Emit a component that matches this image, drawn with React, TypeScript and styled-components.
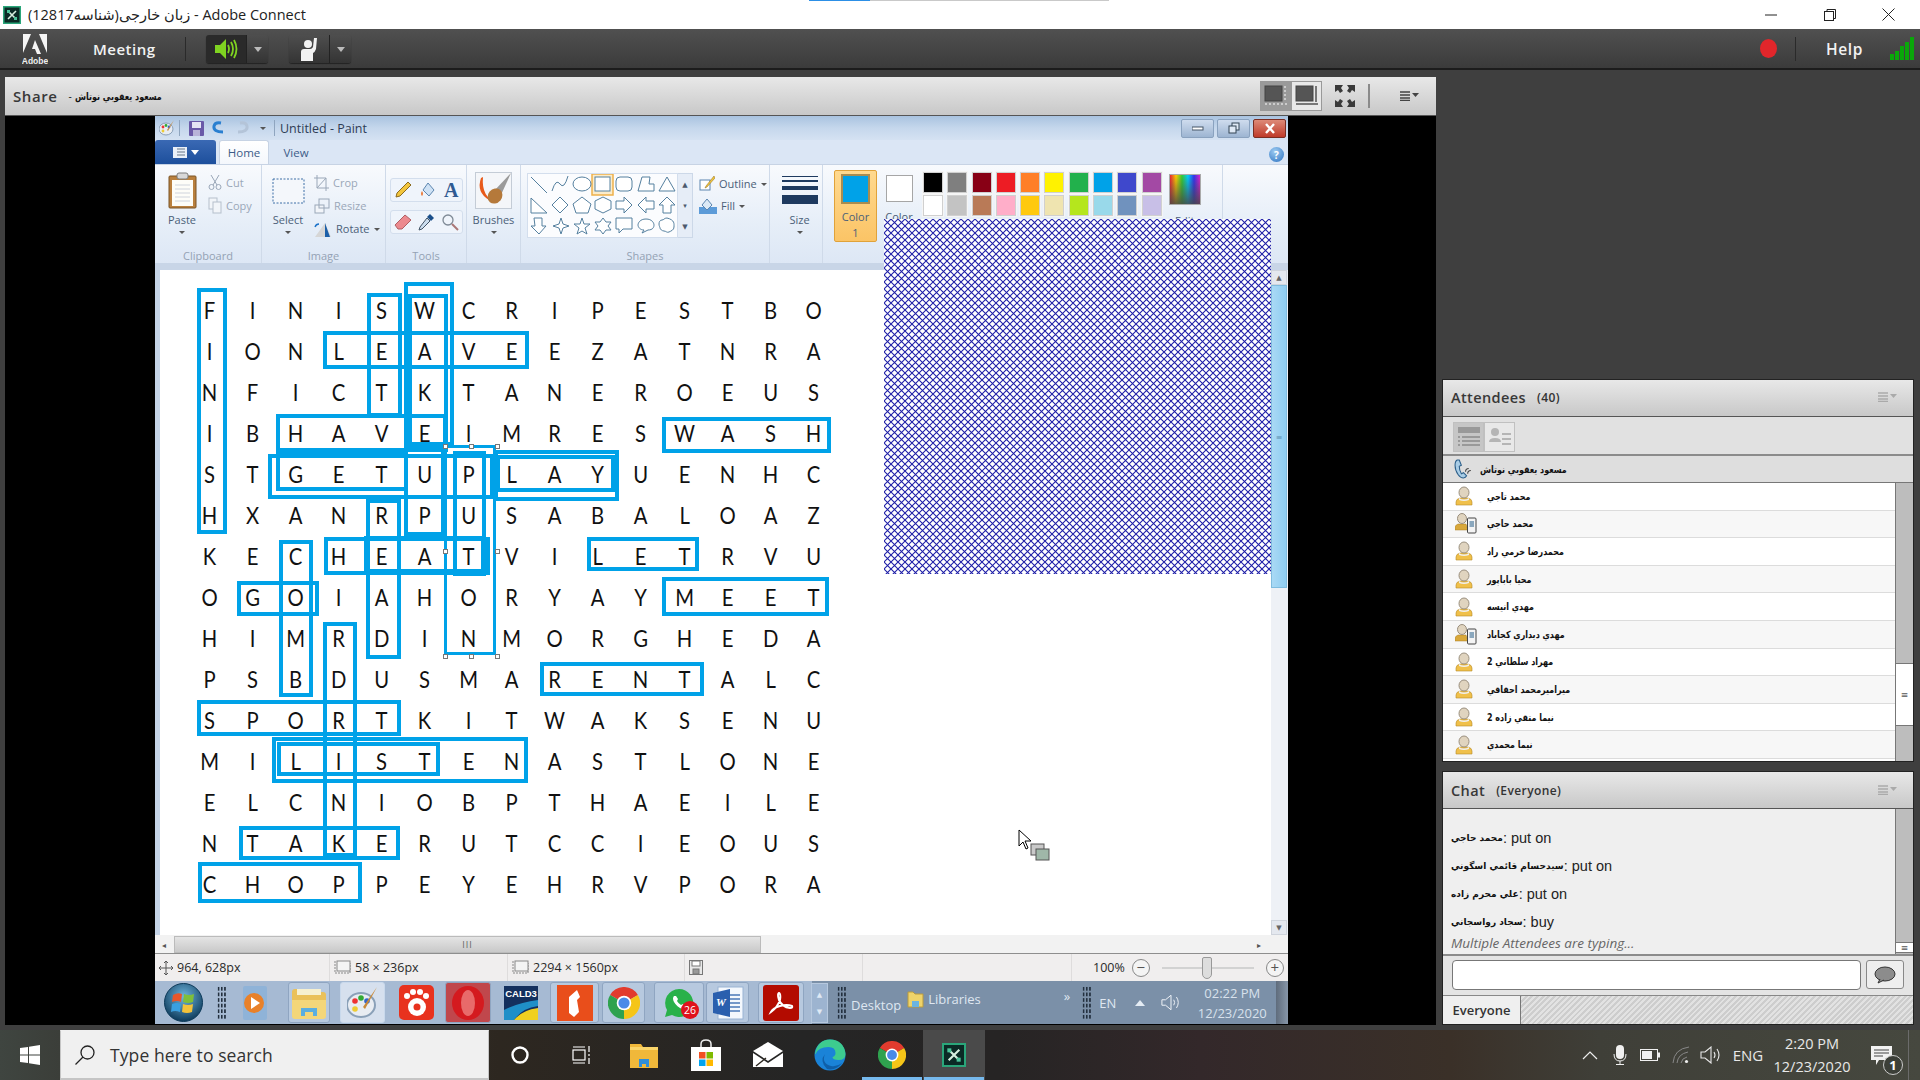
import React from "react";
import styled, { createGlobalStyle } from "styled-components";

const Global = createGlobalStyle`
  html, body { margin: 0; padding: 0; background: #3f3f3f; overflow: hidden; }
  * { box-sizing: border-box; }
`;
const UI = `"Open Sans", "DejaVu Sans", sans-serif`;
const AR = `"DejaVu Sans", sans-serif`;

const Page = styled.div`
  width: 1920px; height: 1080px; display: flex; flex-direction: column; position: relative; overflow: hidden;
  font-family: ${UI};
`;
/* ---------- window chrome ---------- */
const TitleBar = styled.div`
  height: 29px; background: #fff; display: flex; align-items: center; padding-left: 3px; gap: 7px; flex: none; color: #222;
  font-size: 14.5px;
`;
const LoadLine = styled.div`
  position: absolute; top: 0; left: 809px; width: 300px; height: 1px; background: linear-gradient(90deg, #2c8fe6 0 61px, #c9c9c9 61px);
`;
const WinCtl = styled.div`margin-left: auto; display: flex; padding-right: 2px;`;
const WinCtlBtn = styled.div`width: 59px; height: 29px; display: flex; align-items: center; justify-content: center;`;
const TopBar = styled.div`
  height: 41px; flex: none; display: flex; align-items: center; padding-left: 22px;
  background: linear-gradient(#505050, #3b3b3b); border-bottom: 2px solid #1c1c1c; color: #f2f2f2;
`;
const Meeting = styled.span`font-size: 15px; font-weight: 600; letter-spacing: .5px; margin-left: 45px; width: 92px;`;
const TopSep = styled.div<{ $mr?: number; $ml?: number }>`width: 1px; height: 24px; background: #2a2a2a; margin-right: ${p => p.$mr ?? 20}px; margin-left: ${p => p.$ml ?? 0}px;`;
const SplitBtn = styled.div`display: flex; height: 28px; margin-right: 21px; border-radius: 3px; overflow: hidden; box-shadow: 0 1px 1px #222;`;
const SplitMain = styled.div<{ $dark?: boolean }>`
  width: 41px; display: flex; align-items: center; justify-content: center;
  background: ${p => (p.$dark ? "#2a2a2a" : "linear-gradient(#4e4e4e, #343434)")}; border-right: 1px solid #222;
`;
const SplitArrow = styled.div`
  width: 21px; display: flex; align-items: center; justify-content: center; background: linear-gradient(#4e4e4e, #343434);
  &::after { content: ""; border: 4px solid transparent; border-top: 5px solid #bbb; margin-top: 5px; }
`;
const RecDot = styled.div`width: 17px; height: 19px; border-radius: 50%; background: #e2262b; margin-left: auto;`;
const Help = styled.span`font-size: 15.5px; font-weight: 600; letter-spacing: .6px; margin-left: 30px; width: 64px;`;
const Signal = styled.div`display: flex; align-items: flex-end; gap: 1px; height: 23px; margin-right: 6px;`;
const SignalBar = styled.div<{ $h: number }>`width: 4px; height: ${p => p.$h}px; background: #0aa70a;`;
/* ---------- main ---------- */
const Main = styled.div`flex: 1; min-height: 0; display: flex; background: #3f3f3f; padding: 7px 6px 5px 5px; gap: 6px;`;
const SharePod = styled.div`width: 1432px; display: flex; flex-direction: column; background: #000;`;
const PodHeader = styled.div<{ $h: number; $pb?: number }>`
  height: ${p => p.$h}px; flex: none; display: flex; align-items: center; padding: 0 8px ${p => p.$pb || 0}px 8px;
  background: linear-gradient(#e8e8e8, #c8c8c8); border-bottom: 1px solid #555; color: #333;
`;
const PodTitle = styled.span`font-size: 14.5px; font-weight: 600; letter-spacing: .4px; color: #383838;`;
const ShareTitle = styled(PodTitle)`font-size: 15px; letter-spacing: .6px;`;
const PodSub = styled.span`font-size: 12px; margin-left: 11px; color: #333; font-weight: 600; letter-spacing: .4px;`;
const ArabicName = styled.span<{ $s?: number }>`font-family: ${AR}; font-weight: 700; font-size: ${p => p.$s || 10}px; color: #111; unicode-bidi: isolate; direction: rtl;`;
const SqueezedName = styled(ArabicName)`display: inline-block; transform: scaleX(.8); transform-origin: left center; white-space: nowrap;`;
const ShareDash = styled.span`font-size: 10px; margin: 0 3px 0 11px; color: #111;`;
const ShareTools = styled.div`margin-left: auto; display: flex; align-items: center; padding-right: 9px;`;
const LayoutBtn = styled.div<{ $on?: boolean }>`
  width: 31px; height: 30px; display: flex; align-items: center; justify-content: center; border: 1px solid #999;
  background: ${p => (p.$on ? "#e8e8e8" : "#9a9a9a")};
`;
const VLine = styled.div`width: 2px; height: 24px; background: #8a8a8a; margin: 0 30px 0 13px;`;
const ShareBody = styled.div`flex: 1; min-height: 0; padding-left: 150px; padding-right: 148px;`;
/* ---------- paint ---------- */
const Paint = styled.div`height: 100%; display: flex; flex-direction: column; position: relative; font-family: ${UI}; overflow: hidden;`;
const PTitle = styled.div`
  height: 24px; flex: none; display: flex; align-items: center; padding-left: 4px;
  background: linear-gradient(#a9c3e0, #c5d7ec 50%, #d5e2f2);
`;
const PTitleText = styled.span`font-size: 12.5px; color: #2e3c55; margin-left: 5px;`;
const QIcon = styled.span<{ $ml?: number; $mt?: number }>`display: inline-flex; margin-left: ${p => p.$ml || 0}px; margin-top: ${p => p.$mt || 0}px;`;
const QSep = styled.div<{ $ml?: number }>`width: 1px; height: 16px; background: #8fa5bf; margin-left: ${p => p.$ml || 0}px;`;
const CaptionBtns = styled.div`margin-left: auto; display: flex; gap: 3px; padding-right: 2px;`;
const Caption = styled.div<{ $close?: boolean }>`
  width: 33px; height: 19px; border-radius: 2px; border: 1px solid ${p => (p.$close ? "#7a2d22" : "#8aa2bf")};
  background: ${p => (p.$close ? "linear-gradient(#dd8a78, #bf3a2a)" : "linear-gradient(#cfdcee, #9db5d2)")};
  display: flex; align-items: center; justify-content: center;
`;
const PTabs = styled.div`height: 25px; flex: none; display: flex; align-items: flex-end; background: #dbe6f5; position: relative; border-bottom: 1px solid #c7d3e4;`;
const FileBtn = styled.div`width: 61px; height: 24px; background: linear-gradient(#3a69b4, #1d4f9c); border-radius: 3px 3px 0 0; display: flex; align-items: center; justify-content: center; gap: 4px;`;
const FileCaret = styled.span`border: 4px solid transparent; border-top: 5px solid #fff; margin-top: 5px;`;
const Tab = styled.div<{ $on?: boolean }>`
  height: 24px; width: ${p => (p.$on ? 50 : 46)}px; margin-left: ${p => (p.$on ? 3 : 4)}px; font-size: 11.5px; color: #3c5c88;
  display: flex; align-items: center; justify-content: center;
  background: ${p => (p.$on ? "linear-gradient(#fff, #f4f7fc)" : "transparent")};
  border: ${p => (p.$on ? "1px solid #c7d3e4" : "0")}; border-bottom: 0; border-radius: 3px 3px 0 0;
`;
const HelpBall = styled.div`
  position: absolute; right: 4px; top: 7px; width: 15px; height: 15px; border-radius: 50%;
  background: radial-gradient(circle at 40% 30%, #9dcbf2, #2c72c0); color: #fff; font-size: 10px; font-weight: 700;
  display: flex; align-items: center; justify-content: center;
`;
const Ribbon = styled.div`
  height: 105px; flex: none; display: flex; background: linear-gradient(#f8fafd, #e6eef8 60%, #dde7f5);
  border-bottom: 7px solid #c8d5e7; color: #4b5f78; font-size: 11px;
`;
const RGroup = styled.div<{ $w: number }>`
  width: ${p => p.$w}px; flex: none; display: flex; flex-direction: column; border-right: 1px solid #cfdae9; position: relative;
`;
const RBody = styled.div`flex: 1; min-height: 0; display: flex; padding-top: 7px;`;
const RLabel = styled.div`height: 14px; text-align: center; color: #94a2b4; font-size: 11px; line-height: 14px;`;
const BigBtn = styled.div<{ $w: number; $ml?: number }>`
  width: ${p => p.$w}px; margin-left: ${p => p.$ml || 0}px; display: flex; flex-direction: column; align-items: center; color: #4b5f78; font-size: 11px; line-height: 15px;
`;
const BigIcon = styled.div`height: 37px; display: flex; align-items: center; margin-bottom: 3px;`;
const Caret = styled.span`border: 3px solid transparent; border-top: 3px solid #555; margin-top: 4px; height: 0;`;
const SmallCol = styled.div<{ $ml?: number }>`margin-left: ${p => p.$ml || 0}px; padding-top: 1px; display: flex; flex-direction: column; gap: 4px;`;
const SmallBtn = styled.div<{ $off?: boolean }>`
  height: 19px; display: flex; align-items: center; gap: 4px; color: ${p => (p.$off ? "#9aa7b8" : "#4b5f78")}; font-size: 11px;
`;
const ToolPanel = styled.div`
  width: 73px; height: 24px; margin: 0 0 8px 4px; display: flex; align-items: center; justify-content: space-around;
  background: #eff4fb; border: 1px solid #d3deed; border-radius: 3px;
`;
const ToolCol = styled.div`padding-top: 6px; display: flex; flex-direction: column;`;
const ShapesPanel = styled.div`
  margin-left: 6px; margin-top: 1px; width: 151px; height: 65px; flex: none; background: #fbfcfe; border: 1px solid #d3deed;
`;
const ShapeScroll = styled.div`
  width: 15px; height: 65px; flex: none; margin-top: 1px; border: 1px solid #ccd8e8; border-left: 0; background: #e6edf7; display: flex; flex-direction: column; align-items: center; justify-content: space-around; font-size: 7px; color: #4c5a6d;
`;
const OutlineCol = styled.div`margin-left: 6px; padding-top: 2px; display: flex; flex-direction: column; gap: 3px;`;
const ColorOne = styled.div`
  width: 43px; height: 72px; flex: none; margin-left: 11px; margin-top: -2px; border: 1px solid #e0a23a; border-radius: 2px;
  background: linear-gradient(#ffd98f, #fbc466); display: flex; flex-direction: column; align-items: center; padding-top: 3px; color: #4b5f78; font-size: 11px; line-height: 16px; text-align: center;
`;
const ColorChip = styled.div<{ $c: string }>`width: 29px; height: 33px; background: ${p => p.$c}; border: 2px solid #a98c50; margin-bottom: 5px;`;
const ColorTwo = styled.div`
  width: 36px; flex: none; margin-left: 4px; display: flex; flex-direction: column; align-items: center; font-size: 11px; color: #4b5f78;
`;
const ColorTwoChip = styled.div`width: 27px; height: 27px; background: #fff; border: 1px solid #a6a6a6; margin: 3px 0 7px;`;
const Palette = styled.div`display: grid; flex: none; grid-template-columns: repeat(10, 20px); grid-auto-rows: 21px; column-gap: 4.3px; row-gap: 2px; margin-left: 6px; height: 44px;`;
const Swatch = styled.div<{ $c: string }>`background: ${p => p.$c}; border: 1px solid #d0d0d0; outline: 1px solid #f5f5f5;`;
const EditColors = styled.div`margin-left: 7px; flex: none; display: flex; flex-direction: column; align-items: center; font-size: 11px; color: #4b5f78;`;
const Spectrum = styled.div`
  width: 32px; height: 31px; margin: 2px 0 8px; border: 1px solid #aaa;
  background: linear-gradient(transparent, rgba(70,70,70,.85)), linear-gradient(90deg, #e23, #fc0, #3c3, #0cf, #33e, #d2c);
`;
const CanvasRow = styled.div`flex: 1; min-height: 0; display: flex;`;
const CanvasPane = styled.div`
  flex: 1; position: relative; background: #fff; border-left: 5px solid #c4d3e6; padding: 20.5px 0 0 27.5px;
`;
const WordGrid = styled.div`
  display: grid; grid-template-columns: repeat(15, 43.2px); grid-auto-rows: 40.95px; font-family: Lato, "Open Sans", sans-serif; font-size: 22.5px; color: #111;
`;
const Letter = styled.div`display: flex; align-items: center; justify-content: center; transform: scaleX(.9);`;
const WordBox = styled.div`position: absolute; border: 4px solid #00a2e8;`;
const Selection = styled.div`
  position: absolute; border: 2px dashed #fff; outline: 3px solid #00a2e8; outline-offset: -3px;
`;
const Handle = styled.div`position: absolute; width: 5px; height: 5px; background: #fff; border: 1px solid #777;`;
const CursorWrap = styled.div`position: absolute; left: 858px; top: 559px; display: flex;`;
const Lattice = styled.div`position: absolute; left: 729px; top: 103px; width: 387px; height: 355px; display: flex;`;
const VScroll = styled.div`width: 17px; flex: none; background: #eef1f6; display: flex; flex-direction: column; padding-right:1px;`;
const ScrollCap = styled.div`height: 15px; flex: none; background: #e4e8ef; border: 1px solid #cfd4dc; display: flex; align-items: center; justify-content: center; color: #666; font-size: 7px;`;
const ScrollFill = styled.div`flex: 1;`;
const VThumb = styled.div`
  height: 303px; flex: none; background: linear-gradient(90deg, #a9d9f5, #8fcdf1); border: 1px solid #7fbcdf; display: flex; align-items: center; justify-content: center; color: #5b8fb0; font-size: 8px;
`;
const HScroll = styled.div`height: 18px; flex: none; display: flex; align-items: center; background: #f2f2f2; color: #555; font-size: 8px; padding-left: 7px;`;
const HThumb = styled.div`
  width: 587px; height: 17px; margin-left: 8px; background: linear-gradient(#e4e4e4, #c9c9c9); border: 1px solid #bbb; display: flex; align-items: center; justify-content: center; color: #666; font-size: 9px; letter-spacing: 1px;
`;
const HEnd = styled.span`margin-left: 496px;`;
const Status = styled.div`
  height: 28px; flex: none; background: #f0eeee; border-top: 1px solid #8e8e8e; display: flex; align-items: center; color: #2a2a2a; font-size: 12.5px;
`;
const StatusCell = styled.div<{ $w: number }>`
  width: ${p => p.$w}px; height: 100%; flex: none; display: flex; align-items: center; gap: 4px; padding-left: 4px; border-right: 1px solid #dedcdc;
`;
const ZoomPct = styled.span`margin: 0 7px 0 21px;`;
const ZoomSlider = styled.div`width: 92px; height: 2px; background: #d2d2d2; margin: 0 12px; position: relative;`;
const ZoomThumb = styled.div`position: absolute; left: 40px; top: -10px; width: 10px; height: 22px; background: #ddd; border: 1px solid #999; border-radius: 2px 2px 5px 5px;`;
const RoundBtn = styled.div`width: 18px; height: 18px; border: 1px solid #888; border-radius: 50%; display: flex; align-items: center; justify-content: center; font-size: 15px; line-height: 1; color: #555; background: #f4f4f4;`;
/* ---------- Win7 taskbar ---------- */
const Win7Bar = styled.div`
  height: 44px; flex: none; display: flex; align-items: center; color: #dfe7f1; font-size: 14px;
  background: linear-gradient(90deg, #a6bad3 0 657px, #7b90a8 657px); padding-left: 9px; border-bottom: 1px solid #000;
`;
const Tile = styled.div<{ $w: number; $ml: number; $on?: boolean; $bare?: boolean; $red?: boolean }>`
  width: ${p => p.$w}px; margin-left: ${p => p.$ml}px; height: 41px; flex: none; display: flex; align-items: center; justify-content: center; position: relative;
  ${p => !p.$bare && `border: 1px solid ${p.$on ? "#c9d9ec" : "#8fa5c1"}; border-radius: 3px; background: ${p.$red ? "#c0474c" : p.$on ? "rgba(240,245,252,.65)" : "rgba(205,220,238,.45)"};`}
`;
const Grip = styled.div<{ $ml: number }>`
  margin-left: ${p => p.$ml}px; width: 9px; height: 34px; flex: none;
  background-image: radial-gradient(#23303f 1px, transparent 1.2px); background-size: 3.2px 5.6px;
`;
const Spinner = styled.div`margin-left: 7px; width: 17px; height: 40px; flex: none; background: #9db4d0; border: 1px solid #b6c8de; display: flex; flex-direction: column; align-items: center; justify-content: space-between; padding: 6px 0; font-size: 7px; color: #dfe9f5;`;
const DeskText = styled.span<{ $ml: number; $mt?: number }>`margin-left: ${p => p.$ml}px; margin-top: ${p => p.$mt || 0}px; font-size: 13px; flex: none;`;
const Win7Clock = styled.div`margin-left: 14px; width: 74px; text-align: center; line-height: 20px; font-size: 13px; color: #d8e1ec;`;
const ShowDesk = styled.div`margin-left: auto; width: 12px; height: 100%; background: linear-gradient(90deg, #5f6c7c, #8796a8);`;
/* ---------- right column ---------- */
const RightCol = styled.div`flex: 1; display: flex; flex-direction: column; justify-content: flex-end; gap: 9px;`;
const AttPod = styled.div`height: 383px; display: flex; flex-direction: column; background: #e0e0e0; border: 1px solid #222; border-left-color: #222;`;
const MenuGlyph = styled.span`margin-left: auto; display: inline-flex; margin-right: 8px;`;
const ViewBar = styled.div`height: 39px; flex: none; background: #e1e1e1; border-bottom: 2px solid #8b8b8b; padding: 5px 0 0 10px; display: flex;`;
const ViewBtn = styled.div<{ $on?: boolean }>`
  width: 31px; height: 30px; border: 1px solid #c0c0c0; background: ${p => (p.$on ? "#c6c6c6" : "#e8e8e8")}; display: flex; align-items: center; justify-content: center;
`;
const PresenterRow = styled.div`height: 27px; flex: none; background: #dedede; border-bottom: 1px solid #777; display: flex; align-items: center; padding-left: 11px; gap: 6px;`;
const ListWrap = styled.div`flex: 1; min-height: 0; display: flex;`;
const AttList = styled.div`flex: 1; display: flex; flex-direction: column; padding-bottom: 2px; background: #fff;`;
const AttRow = styled.div<{ $alt: boolean }>`
  flex: 1; display: flex; align-items: center; padding-left: 12px; gap: 14px; background: ${p => (p.$alt ? "#f7f7f7" : "#fff")}; border-bottom: 1px solid #dcdcdc;
`;
const AttRowMobile = styled(AttRow)`gap: 10px;`;
const SideScroll = styled.div`width: 18px; flex: none; background: #bdbdbd; border-left: 1px solid #777; display: flex; flex-direction: column;`;
const SideThumb = styled.div<{ $h: number; $mt: number }>`
  height: ${p => p.$h}px; margin-top: ${p => p.$mt}px; flex: none; background: #fff; border-top: 1px solid #777; border-bottom: 1px solid #777; display: flex; align-items: center; justify-content: center; font-size: 9px; color: #555; line-height: 1;
`;
const ChatPod = styled.div`height: 254px; display: flex; flex-direction: column; background: #efefef; border: 1px solid #222;`;
const ChatBody = styled.div`height: 147px; flex: none; display: flex; border-bottom: 2px solid #8b8b8b;`;
const Msgs = styled.div`flex: 1; padding: 15px 0 0 8px; position: relative; font-family: "Liberation Sans", sans-serif; font-size: 14.5px; color: #222;`;
const Msg = styled.div`height: 28px; display: flex; align-items: center; gap: 0; white-space: pre;`;
const Typing = styled.div`font-family: ${UI}; font-style: italic; font-size: 13.5px; color: #666; margin-top: -2px;`;
const InputRow = styled.div`height: 40px; flex: none; background: #e4e4e4; padding: 4px 9px 0 9px; display: flex; gap: 5px; border-bottom: 1px solid #888;`;
const ChatInput = styled.div`width: 409px; height: 30px; background: #fff; border: 1px solid #777; border-radius: 4px;`;
const SendBtn = styled.div`width: 38px; height: 29px; background: #eee; border: 1px solid #888; border-radius: 3px; display: flex; align-items: center; justify-content: center;`;
const ChatFoot = styled.div`flex: 1; display: flex; background: repeating-linear-gradient(-45deg, #cdcdcd 0 2px, #e2e2e2 2px 4px);`;
const ChatTab = styled.div`width: 78px; background: #efefef; border-right: 1px solid #777; display: flex; align-items: center; justify-content: center; font-size: 13px; font-weight: 600; color: #333;`;
/* ---------- Win10 taskbar ---------- */
const Taskbar = styled.div`
  height: 50px; flex: none; display: flex; align-items: center; color: #eee;
  background: linear-gradient(90deg, #3f4540 0, #3b3e39 60px, #2d2720 500px, #252525 800px, #262424 1000px, #33282a 1200px, #3a3028 1450px, #3f3f38 1600px, #46483f 1920px);
`;
const StartBtn = styled.div`width: 60px; height: 50px; display: flex; align-items: center; justify-content: center;`;
const SearchBox = styled.div`
  width: 429px; height: 50px; background: #f0f0f0; border: 1px solid #c5c5c5; border-bottom: 2px solid #c5c5c5; border-top-color: #f0f0f0; display: flex; align-items: center; padding-left: 14px; gap: 15px; color: #333; font-size: 17.5px; letter-spacing: .1px;
`;
const TaskItem = styled.div<{ $on?: boolean; $open?: boolean }>`
  width: 62px; height: 50px; display: flex; align-items: center; justify-content: center; position: relative; flex: none;
  background: ${p => (p.$on ? "#4a4a4a" : "transparent")};
  ${p => (p.$open ? `&::after { content: ""; position: absolute; left: 0; right: 0; bottom: 0; height: 3px; margin: 0 1px; background: #76b9ed; }` : "")}
`;
const Tray = styled.div`margin-left: auto; display: flex; align-items: center; height: 50px;`;
const TrayItem = styled.div<{ $w: number }>`width: ${p => p.$w}px; height: 50px; display: flex; align-items: center; justify-content: center; flex: none; position: relative; font-size: 15px; color: #e8e8e8;`;
const Clock = styled.div`text-align: center; line-height: 23px; font-size: 14.5px; color: #e8e8e8;`;
const NotifBadge = styled.span`position: absolute; left: 29px; top: 25px; width: 20px; height: 20px; border-radius: 50%; border: 1px solid #ccc; background: #3c3f38; font-size: 13px; font-weight: 700; display: flex; align-items: center; justify-content: center; color: #fff;`;
const DeskStrip = styled.div`width: 12px; height: 50px; border-left: 1px solid #6b6b6b; flex: none;`;

/* ---------- drawings ---------- */
const ACIcon = ({ s = 18 }: { s?: number }) => (
  <svg width={s} height={s} viewBox="0 0 18 18">
    <rect x=".75" y=".75" width="16.5" height="16.5" fill="#0b2a25" stroke="#2aa67a" strokeWidth="1.5" />
    <path d="M5 5 L13 13 M13 5 L5 13" stroke="#d8f0e0" strokeWidth="1.6" />
    <rect x="4" y="4" width="3" height="3" fill="#4cc49a" /><rect x="11" y="11" width="3" height="3" fill="#4cc49a" />
  </svg>
);
const AdobeLogo = () => (
  <svg width="26" height="32" viewBox="0 0 26 32">
    <path d="M1 1h8L1 20z M25 1h-8l8 19z M13 7l6 14h-4l-2-5h-3z" fill="#f5f5f5" />
    <text x="13" y="31" fontSize="8.5" fontFamily="Liberation Sans" fontWeight="700" fill="#eee" textAnchor="middle">Adobe</text>
  </svg>
);
const Speaker = () => (
  <svg width="24" height="22" viewBox="0 0 24 22">
    <path d="M1 7h5l6-6v20l-6-6H1z" fill="#7fd321" />
    <path d="M14 7q2 4 0 8M17 4q4 7 0 14M20 2q5 9 0 18" stroke="#7fd321" strokeWidth="1.8" fill="none" />
  </svg>
);
const HandRaise = () => (
  <svg width="20" height="24" viewBox="0 0 20 24" fill="#f2f2f2">
    <circle cx="9" cy="7" r="4" /><path d="M2 24v-9q0-3 3-3h6q2 0 3-2l1-9h3l-1 11q-1 3-3 4v8z" />
  </svg>
);
const LayoutIcon = ({ dark }: { dark?: boolean }) => (
  <svg width="24" height="22" viewBox="0 0 24 22">
    <rect x="1" y="1" width="17" height="15" fill="#555" stroke="#444" />
    <path d="M1 19h22M21 1v16" stroke={dark ? "#ccc" : "#777"} strokeWidth="2" strokeDasharray={dark ? "2 2" : "none"} />
  </svg>
);
const FullIcon = () => (
  <svg width="20" height="22" viewBox="0 0 20 22" fill="#3a3a3a">
    <path d="M0 0h8L6 3l2 3-3 2-2-3-3 2z M20 0h-8l2 3-2 3 3 2 2-3 3 2z M0 22h8l-2-3 2-3-3-2-2 3-3-2z M20 22h-8l2-3-2-3 3-2 2 3 3-2z" />
  </svg>
);
const MenuIcon = ({ c = "#444" }: { c?: string }) => (
  <svg width="19" height="10" viewBox="0 0 19 10">
    <path d="M0 1h10M0 4h10M0 7h10M0 9.5h10" stroke={c} strokeWidth="1.3" /><path d="M12 2h7l-3.5 4z" fill={c} />
  </svg>
);
const UserIcon = () => (
  <svg width="18" height="20" viewBox="0 0 18 20">
    <path d="M1 19v-3q0-3 4-4h8q4 1 4 4v3z" fill="#f0c04a" stroke="#b58a2a" strokeWidth=".6" />
    <ellipse cx="9" cy="6.5" rx="5" ry="5.5" fill="#e0d4bf" stroke="#9a8f7e" /><path d="M4 12q5 3 10 0v2q-5 2-10 0z" fill="#efefef" />
  </svg>
);
const UserMobile = () => (
  <svg width="22" height="21" viewBox="0 0 22 21">
    <path d="M0 17v-2q0-3 3-4h8l2 6z" fill="#d9a83a" stroke="#a97f25" strokeWidth=".5" />
    <ellipse cx="7" cy="5.5" rx="4.5" ry="5" fill="#e0d4bf" stroke="#9a8f7e" />
    <rect x="12.5" y="5" width="8.5" height="15" rx="1" fill="#f4f4f4" stroke="#444" />
    <rect x="14.5" y="8" width="4.5" height="6" fill="#8aa7bd" />
  </svg>
);
const PhoneIcon = () => (
  <svg width="20" height="20" viewBox="0 0 19 19">
    <path d="M3 1q-2 1-2 5 0 5 3 9 2 3 5 3 2 0 3-2l-3-3-2 1Q5 11 5 7l2-1-2-5z" fill="#a9cde6" stroke="#2c5f8a" />
    <path d="M11 12q0-3 3-3M13 14q0-3 3-3" stroke="#444" fill="none" />
  </svg>
);
const Clipboard = () => (
  <svg width="29" height="37" viewBox="0 0 29 37">
    <rect x="1" y="4" width="27" height="32" rx="1" fill="#b9803e" stroke="#7b5526" />
    <rect x="4" y="8" width="21" height="26" fill="#fdfdf8" />
    <path d="M7 13h15M7 17h15M7 21h15M7 25h15M7 29h15" stroke="#cfd4dc" />
    <rect x="9" y="1" width="11" height="6" rx="2" fill="#d8d8d8" stroke="#7c7c7c" />
  </svg>
);
const Scissors = () => (
  <svg width="14" height="17" viewBox="0 0 14 17" stroke="#9aa7b8" fill="none">
    <path d="M3 1l6 10M11 1L5 11" /><circle cx="3.5" cy="13" r="2.5" /><circle cx="10.5" cy="13" r="2.5" />
  </svg>
);
const CopyIcon = () => (
  <svg width="14" height="17" viewBox="0 0 14 17" stroke="#b5bfcc" fill="#f2f5f9">
    <rect x="1" y="1" width="8" height="11" /><rect x="5" y="5" width="8" height="11" />
  </svg>
);
const SelectIcon = () => <svg width="33" height="26" viewBox="0 0 33 26"><rect x="1" y="1" width="31" height="24" fill="#f4f7fb" stroke="#3c6ea6" strokeDasharray="2 1.5" /></svg>;
const CropIcon = () => <svg width="15" height="16" viewBox="0 0 15 16" fill="none" stroke="#9aa7b8"><path d="M3 0v13h12M0 3h12v13M3 13L12 3" /></svg>;
const ResizeIcon = () => <svg width="16" height="16" viewBox="0 0 16 16" fill="#f2f5f9" stroke="#9aa7b8"><rect x="1" y="7" width="9" height="8" /><rect x="5" y="1" width="10" height="9" fill="none" /></svg>;
const RotateIcon = () => <svg width="18" height="18" viewBox="0 0 18 18"><path d="M1 17h16L11 3z" fill="#d6d6d6" /><path d="M11 3l5 14h-5z" fill="#1c5fa8" /><path d="M1 7q1-3 4-3" stroke="#1d73c9" fill="none" strokeWidth="1.4" /></svg>;
const Pencil = () => <svg width="18" height="18" viewBox="0 0 18 18"><path d="M14 1l3 3L6 15l-4 1 1-4z" fill="#f2c53d" stroke="#8a6a1e" /></svg>;
const Bucket = () => <svg width="18" height="18" viewBox="0 0 18 18"><path d="M9 2l6 7-5 6-6-6z" fill="#cfe2f5" stroke="#5c86b0" /><path d="M3 10q-2 3 0 5 2-2 0-5z" fill="#ea7a3a" /></svg>;
const BigA = styled.span`font-family: "Liberation Serif", serif; font-weight: 700; font-size: 20px; color: #2f5a92; line-height: 1;`;
const Eraser = () => <svg width="18" height="18" viewBox="0 0 18 18"><path d="M11 2l6 5-9 9H4l-3-4z" fill="#ec8a8f" stroke="#b05e62" /></svg>;
const Dropper = () => <svg width="18" height="18" viewBox="0 0 18 18"><path d="M13 1l4 4-3 3-4-4z" fill="#1b4f8a" /><path d="M10 5l3 3-8 8-3 1 1-3z" fill="#cde" stroke="#456" /></svg>;
const Magnifier = () => <svg width="18" height="18" viewBox="0 0 18 18" fill="none" stroke="#7f8a96" strokeWidth="1.3"><circle cx="7" cy="7" r="5" /><path d="M11 11l6 6" stroke="#a77" strokeWidth="2" /></svg>;
const BrushIcon = () => (
  <svg width="37" height="37" viewBox="0 0 37 37">
    <rect x=".5" y=".5" width="36" height="36" fill="#f4f6f9" stroke="#c4ccd6" />
    <path d="M6 6q-5 14 8 22 6 3 8 3-16-6-14-26z" fill="#e85a1a" /><path d="M36 1L19 19l6 6z" fill="#9a9a9a" />
    <ellipse cx="20" cy="24" rx="7" ry="8" fill="#b5793a" transform="rotate(40 20 24)" />
  </svg>
);
const shapeStroke = { stroke: "#55809f", fill: "#fff", strokeWidth: 1 };
const Shapes = () => (
  <svg width="149" height="63" viewBox="0 0 149 63">
    <rect x="64" y="0" width="21" height="21" fill="#fbeccb" stroke="#eeb04a" strokeWidth="1.5" />
    <g {...shapeStroke}>
      <path d="M3 3l16 16" /><path d="M24 17q4-13 8-7t8-8" fill="none" /><ellipse cx="54" cy="10" rx="9" ry="7" />
      <rect x="67" y="3" width="15" height="14" /><rect x="88" y="3" width="16" height="14" rx="4" />
      <path d="M110 17l4-14h8l-1 7h5v7z" /><path d="M131 17l8-14 8 14z" />
      <path d="M3 39V24l16 15z" /><path d="M32 23l8 8-8 8-8-8z" /><path d="M54 23l9 7-3 9H48l-3-9z" />
      <path d="M75 23l8 4v8l-8 4-8-4v-8z" /><path d="M88 27h8v-4l8 8-8 8v-4h-8z" /><path d="M126 27h-8v-4l-8 8 8 8v-4h8z" />
      <path d="M139 23l8 8h-4v8h-8v-8h-4z" />
      <path d="M6 44h8v8h4l-7 8-8-8h4z" /><path d="M33 44l2 6 6 2-6 2-2 6-2-6-6-2 6-2z" /><path d="M54 44l2 6h6l-5 4 2 6-5-3-5 3 2-6-5-4h6z" />
      <path d="M75 44l3 4h5l-3 4 3 4h-5l-3 4-3-4h-5l3-4-3-4h5z" /><path d="M88 44h16v11h-9l-4 4v-4h-3z" />
      <path d="M118 45c-6 0-8 4-8 6s2 5 6 5l-2 3 6-3c5 0 6-3 6-5s-2-6-8-6z" /><path d="M139 44c-3 0-3 2-5 2s-3 2-3 4 1 3 1 4 2 3 4 3 3 2 5 1 5-2 5-5 1-7-7-9z" />
    </g>
  </svg>
);
const OutlineIcon = () => <svg width="16" height="15" viewBox="0 0 16 15"><rect x="1" y="4" width="10" height="10" fill="#fff" stroke="#5c86b0" /><path d="M15 0l1 2-8 9-2 1 1-2z" fill="#f2c53d" stroke="#8a6a1e" strokeWidth=".5" /></svg>;
const FillIcon = () => <svg width="18" height="16" viewBox="0 0 18 16"><rect x="0" y="9" width="18" height="7" fill="#5c9bd8" /><path d="M8 1l5 6-5 5-5-5z" fill="#dce9f5" stroke="#5c86b0" /></svg>;
const SizeLines = () => (
  <svg width="36" height="29" viewBox="0 0 36 29" fill="#1e3a5f">
    <rect y="0" width="36" height="1" /><rect y="4" width="36" height="2" /><rect y="10" width="36" height="4" /><rect y="19" width="36" height="9" />
  </svg>
);
const LatticeArt = () => (
  <svg width="387" height="355">
    <defs>
      <pattern id="lat" width="7" height="7" patternUnits="userSpaceOnUse">
        <rect width="7" height="7" fill="#fff" />
        <path d="M0 0L7 7M7 0L0 7" stroke="#1f1fa8" strokeWidth="1.1" />
      </pattern>
    </defs>
    <rect width="387" height="355" fill="url(#lat)" />
  </svg>
);
const MoveIcon = () => <svg width="14" height="14" viewBox="0 0 14 14" stroke="#555" fill="none"><path d="M7 0v14M0 7h14M5 2l2-2 2 2M5 12l2 2 2-2M2 5L0 7l2 2M12 5l2 2-2 2" /></svg>;
const DimIcon = ({ w = 17 }: { w?: number }) => <svg width={w} height="15" viewBox="0 0 17 15" fill="#f4f4f4" stroke="#888"><path d="M1 1v12h15V3" fill="none" strokeDasharray="2 1" /><rect x="3" y="1" width="13" height="10" /></svg>;
const SaveSmall = () => <svg width="14" height="15" viewBox="0 0 14 15" fill="#e8e8e8" stroke="#777"><rect x=".5" y=".5" width="13" height="14" /><rect x="3" y="1" width="8" height="5" fill="#fff" /><rect x="4" y="9" width="6" height="5" fill="#999" /></svg>;
const PaletteIcon = ({ s = 16 }: { s?: number }) => (
  <svg width={s} height={s} viewBox="0 0 16 16">
    <ellipse cx="7" cy="9" rx="7" ry="6" fill="#e8ecf2" stroke="#8aa0b8" /><circle cx="4" cy="7" r="1.4" fill="#e33" /><circle cx="7" cy="5.5" r="1.4" fill="#3a3" /><circle cx="10" cy="7" r="1.4" fill="#36c" /><circle cx="4" cy="11" r="1.4" fill="#ec3" />
    <path d="M15 0L8 10l1 1z" fill="#c98a3a" />
  </svg>
);
const Floppy = () => <svg width="15" height="15" viewBox="0 0 15 15"><rect width="15" height="15" rx="1" fill="#6a5aa8" /><rect x="3" y="1" width="9" height="6" fill="#e6e6f4" /><rect x="4" y="9" width="7" height="6" fill="#b8b4d8" /></svg>;
const Undo = ({ off }: { off?: boolean }) => <svg width="15" height="16" viewBox="0 0 15 16" fill="none" stroke={off ? "#b4c4d8" : "#2a7fd0"} strokeWidth="3"><path d={off ? "M3 12q10 0 9-6-1-4-7-3" : "M12 12Q2 12 3 6q1-4 7-3"} /></svg>;
const WinOrb = () => (
  <svg width="39" height="39" viewBox="0 0 39 39">
    <defs><radialGradient id="orb" cx="50%" cy="35%" r="65%"><stop offset="0" stopColor="#6fb7e0" /><stop offset="1" stopColor="#0d3a5a" /></radialGradient></defs>
    <circle cx="19.5" cy="19.5" r="19" fill="url(#orb)" stroke="#0d3a5a" />
    <path d="M9 12q5-3 9-1l-1 8q-4-2-9 0z" fill="#e8562a" /><path d="M20 11q5 2 10 0l-1 8q-5 2-10 0z" fill="#7fbf3a" />
    <path d="M8 21q5-2 9 0l-1 8q-5-2-9 0z" fill="#3aa0e0" /><path d="M19 21q5 2 10 0l-1 8q-5 2-10 0z" fill="#f2c23a" />
  </svg>
);
const PlayerIcon = () => <svg width="26" height="36" viewBox="0 0 26 36"><rect x="1" y="1" width="24" height="34" rx="2" fill="#8fb3d8" /><circle cx="12" cy="18" r="10" fill="#e8812a" /><path d="M9 12l9 6-9 6z" fill="#fff" /></svg>;
const ExplorerTile = () => (
  <svg width="36" height="34" viewBox="0 0 36 34">
    <path d="M1 6q0-3 3-3h10l3 3h15q3 0 3 3v22H1z" fill="#eac15a" /><path d="M6 3h24v6H6z" fill="#f6f0d0" />
    <path d="M1 14h34v16q0 3-3 3H4q-3 0-3-3z" fill="#f3d67a" /><path d="M10 30v-8h16v8h-4v-4h-8v4z" fill="#5aaee0" />
  </svg>
);
const GomIcon = () => (
  <svg width="35" height="35" viewBox="0 0 35 35">
    <rect width="35" height="35" rx="5" fill="#e8321e" /><circle cx="18" cy="22" r="9" fill="#fff" /><circle cx="18" cy="22" r="3.5" fill="#e8321e" />
    <circle cx="8" cy="11" r="3" fill="#fff" /><circle cx="14" cy="7" r="3" fill="#fff" /><circle cx="21" cy="7" r="3" fill="#fff" /><circle cx="27" cy="11" r="3" fill="#fff" />
  </svg>
);
const OperaIcon = () => <svg width="36" height="36" viewBox="0 0 36 36"><ellipse cx="18" cy="18" rx="16" ry="17" fill="#d41a1f" /><ellipse cx="18" cy="18" rx="7" ry="13" fill="#e86a6a" /></svg>;
const CaldIcon = () => (
  <svg width="34" height="34" viewBox="0 0 34 34">
    <rect width="34" height="34" fill="#14305e" /><path d="M0 34V24q16-8 34-10v6q-16 2-24 14z" fill="#1f8fc8" /><path d="M10 34q8-10 24-12v12z" fill="#f0d020" />
    <text x="17" y="11" fontFamily="Liberation Sans" fontWeight="700" fontSize="9.5" fill="#fff" textAnchor="middle">CALD3</text>
  </svg>
);
const NitroIcon = () => <svg width="36" height="36" viewBox="0 0 36 36"><rect width="36" height="36" fill="#e94e1b" /><path d="M12 28V12l8-7 3 7-3 3 2 12-5 5z" fill="#fff" /></svg>;
const ChromeIcon = ({ s = 36 }: { s?: number }) => (
  <svg width={s} height={s} viewBox="0 0 36 36">
    <path d="M18 18L2.4 9A18 18 0 0 1 33.6 9z" fill="#e23b2e" /><path d="M18 18L2.4 9A18 18 0 0 0 18 36z" fill="#2fa24f" /><path d="M18 18L18 36A18 18 0 0 0 33.6 9z" fill="#f5c518" />
    <circle cx="18" cy="18" r="8.2" fill="#fff" /><circle cx="18" cy="18" r="6.3" fill="#4a8ae8" />
  </svg>
);
const WhatsApp = () => <svg width="30" height="30" viewBox="0 0 30 30"><path d="M15 1a14 14 0 0 0-12 21L1 29l7-2A14 14 0 1 0 15 1z" fill="#29b14a" /><path d="M10 8q-2 2 0 6 3 5 8 7 3 0 4-3l-3-2-2 1q-3-2-4-4l1-2-2-3z" fill="#fff" /></svg>;
const Badge = styled.span`position: absolute; right: 4px; bottom: 3px; width: 18px; height: 18px; border-radius: 50%; background: #e0111c; color: #fff; font-size: 10.5px; display: flex; align-items: center; justify-content: center;`;
const WordIcon = () => (
  <svg width="32" height="36" viewBox="0 0 32 36">
    <rect x="6" y="2" width="25" height="32" fill="#f4f8fd" stroke="#9ab4d4" /><path d="M16 10h12M16 14h12M16 18h12M16 22h12M16 26h12" stroke="#4a78b8" strokeWidth="1.3" />
    <path d="M1 8l17-4v28L1 28z" fill="#2a5fae" /><text x="9" y="21" fontFamily="Liberation Serif" fontWeight="700" fontStyle="italic" fontSize="11" fill="#fff" textAnchor="middle">W</text>
  </svg>
);
const Acrobat = () => <svg width="36" height="36" viewBox="0 0 36 36"><rect width="36" height="36" rx="3" fill="#b30b00" /><path d="M8 27q6-4 9-12 1-6-1-7-2 1 0 7 3 7 11 8 3 0 2-2-5-2-12 0-7 2-9 6z" fill="none" stroke="#fff" strokeWidth="2" /></svg>;
const FolderSmall = () => <svg width="17" height="19" viewBox="0 0 17 19"><path d="M1 3h5l2 2h8v13H1z" fill="#eed36a" stroke="#b89a3e" /><rect x="5" y="12" width="7" height="6" fill="#6bb4e0" /></svg>;
const SpeakerLine = ({ s = "#e8e8e8", big }: { s?: string; big?: boolean }) => (
  <svg width={big ? 22 : 20} height={big ? 18 : 19} viewBox="0 0 22 18" fill="none" stroke={s} strokeWidth="1.1">
    <path d="M1 6h4l6-5v16l-6-5H1z" /><path d="M14 6q2 3 0 6M17 3q4 6 0 12" />
  </svg>
);
const WinLogo = () => <svg width="20" height="20" viewBox="0 0 20 20" fill="#fff"><path d="M0 3l8-1v7.5H0z M9 1.8L20 0v9.5H9z M0 10.5h8V18l-8-1z M9 10.5h11V20L9 18.2z" /></svg>;
const SearchGlass = () => <svg width="20" height="20" viewBox="0 0 20 20" fill="none" stroke="#222" strokeWidth="1.3"><circle cx="12.5" cy="7.5" r="6.5" /><path d="M8 12l-7.5 7.5" /></svg>;
const Cortana = () => <svg width="20" height="20" viewBox="0 0 20 20"><circle cx="10" cy="10" r="7.5" fill="none" stroke="#fff" strokeWidth="2.4" /></svg>;
const TaskView = () => <svg width="20" height="20" viewBox="0 0 20 20" fill="none" stroke="#fff" strokeWidth="1.2"><rect x="1" y="5" width="12" height="10" /><path d="M1 2h12M1 18h12M17 1v6M17 9v2M17 13v6" /></svg>;
const Folder10 = () => <svg width="28" height="26" viewBox="0 0 28 26"><path d="M0 2h11l2 3h15v21H0z" fill="#f0b83a" /><path d="M9 25v-8h10v8h-3v-3h-4v3z" fill="#2f8ed8" /><rect x="0" y="5" width="28" height="3" fill="#fad56a" /></svg>;
const StoreIcon = () => (
  <svg width="30" height="32" viewBox="0 0 30 32">
    <path d="M10 8V5q0-4 5-4t5 4v3" fill="none" stroke="#eee" strokeWidth="1.5" /><rect y="8" width="30" height="24" fill="#fff" />
    <rect x="8" y="13" width="6.5" height="6.5" fill="#f25022" /><rect x="15.5" y="13" width="6.5" height="6.5" fill="#7fba00" /><rect x="8" y="20.5" width="6.5" height="6.5" fill="#00a4ef" /><rect x="15.5" y="20.5" width="6.5" height="6.5" fill="#ffb900" />
  </svg>
);
const MailIcon = () => <svg width="30" height="26" viewBox="0 0 30 26"><path d="M0 9L15 0l15 9-15 10z" fill="#fff" /><path d="M0 11v14h30V11L15 21z" fill="#fff" /><path d="M3 24l10-8" stroke="#2c2720" strokeWidth="1.3" /></svg>;
const EdgeIcon = () => (
  <svg width="32" height="32" viewBox="0 0 32 32">
    <circle cx="16" cy="16" r="15.5" fill="#1a83d8" /><path d="M1 15Q3 1 16 .5 30 1 31.5 15q0 6-7 6-6 0-6-3 3-1 3-4 0-6-7-6-10 0-13 7z" fill="#3dcb8f" />
    <path d="M13 30q-8-8-2-15-4 9 6 12 6 1 11-3-6 8-15 6z" fill="#0f5fa8" />
  </svg>
);
const Mic = () => <svg width="14" height="20" viewBox="0 0 14 20"><rect x="3" y="0" width="8" height="14" rx="4" fill="#f0f0f0" /><path d="M1 9q0 7 6 7t6-7M7 16v3M3 19.5h8" stroke="#f0f0f0" fill="none" /></svg>;
const Battery = () => <svg width="20" height="12" viewBox="0 0 20 12" fill="none" stroke="#f0f0f0"><rect x=".5" y=".5" width="17" height="11" /><rect x="2" y="2" width="10" height="8" fill="#f0f0f0" stroke="none" /><rect x="18" y="4" width="2" height="4" fill="#f0f0f0" /></svg>;
const Wifi = () => <svg width="18" height="18" viewBox="0 0 18 18" fill="none" stroke="#888"><path d="M1 17Q2 3 17 1M5 17q1-9 11-11M9 17q1-5 6-6" /><circle cx="14.5" cy="15.5" r="1.6" fill="#eee" stroke="none" /></svg>;
const NotifIcon = () => <svg width="21" height="19" viewBox="0 0 21 19"><path d="M0 0h21v14H8l-3 5v-5H0z" fill="#f2f2f2" /><path d="M3 4h15M3 7h15M3 10h9" stroke="#444" /></svg>;
const ChatBubble = () => <svg width="22" height="18" viewBox="0 0 22 18"><ellipse cx="11" cy="8" rx="10" ry="7" fill="#8c8c8c" stroke="#333" /><path d="M6 13l-2 4 6-3" fill="#8c8c8c" stroke="#333" /></svg>;
const ViewListIcon = () => <svg width="22" height="20" viewBox="0 0 22 20" fill="#999"><rect width="22" height="6" /><path d="M0 9h2v2H0zM4 9h18v2H4zM0 13h2v2H0zM4 13h18v2H4zM0 17h2v2H0zM4 17h18v2H4z" /></svg>;
const ViewCardIcon = () => <svg width="22" height="18" viewBox="0 0 22 18" fill="#b5b5b5"><circle cx="6" cy="4" r="4" /><path d="M0 14q0-4 6-4t6 4zM13 5h9v2h-9zM13 10h9v2h-9zM13 15h9v2h-9z" /></svg>;
const CursorArt = () => (
  <svg width="34" height="34" viewBox="0 0 34 34">
    <path d="M1 1v16l4-4 3 7 2-1-3-7h6z" fill="#fff" stroke="#000" />
    <rect x="13" y="15" width="13" height="11" fill="#c9c9c9" stroke="#555" /><rect x="18" y="20" width="13" height="11" fill="#9fb7a8" stroke="#555" />
  </svg>
);

/* ---------- data ---------- */
const ROWS = ["FINISWCRIPESTBO","IONLEAVEEZATNRA","NFICTKTANEROEUS","IBHAVEIMRESWASH","STGETUPLAYUENHC","HXANRPUSABALOAZ","KECHEATVILETRVU","OGOIAHORYAYMEET","HIMRDINMORGHEDA","PSBDUSMARENTALC","SPORTKITWAKSENU","MILISTENASTLONE","ELCNIOBPTHAEILE","NTAKERUTCCIEOUS","CHOPPEYEHRVPORA"];
type R = [number, number, number, number];
const BOXES: R[] = [
  [197,289,227,535],[367,294,402,418],[404,283,454,447],[408,295,448,453],[404,447,445,537],[323,332,529,370],
  [276,415,447,453],[662,418,831,454],[276,452,408,492],[268,455,494,500],[494,451,619,502],[496,456,615,493],
  [453,452,486,577],[366,500,401,660],[324,538,490,576],[364,537,485,574],[587,538,699,572],[662,578,829,617],
  [279,541,313,698],[237,582,319,617],[540,663,704,697],[323,623,357,858],[197,701,401,737],[272,738,528,784],
  [277,743,440,777],[239,827,400,861],[198,863,362,904],
];
const PANE_X = 160, PANE_Y = 271;
const SEL: R = [444, 446, 496, 656];
const COLORS = ["#000","#7f7f7f","#880015","#ed1c24","#ff7f27","#fff200","#22b14c","#00a2e8","#3f48cc","#a349a4","#fff","#c3c3c3","#b97a57","#ffaec9","#ffc90e","#efe4b0","#b5e61d","#99d9ea","#7092be","#c8bfe7"];
const ATT: { n: string; m?: boolean }[] = [
  { n: "محمد تاجي" }, { n: "محمد حاجي", m: true }, { n: "محمدرضا خرمي راد" }, { n: "محيا باباپور" }, { n: "مهدي انيسه" },
  { n: "مهدي ديداري كجاباد", m: true }, { n: "مهراد سلطاني 2" }, { n: "ميراميرمحمد احقاقي" }, { n: "نيما متقي زاده 2" }, { n: "نيما محمدي" },
];
const MSGS = [["محمد حاجي", "put on"], ["سيدحسام قائمي اسگوني", "put on"], ["علي محرم زاده", "put on"], ["سجاد رواسجاني", "buy"]];
const PRESENTER = "مسعود يعقوبي نوتاش";

export default function App() {
  const sw = SEL[2] - SEL[0], sh = SEL[3] - SEL[1];
  const handles = [[0,0],[.5,0],[1,0],[0,.5],[1,.5],[0,1],[.5,1],[1,1]];
  return (
    <Page>
      <Global />
      <LoadLine />
      <TitleBar>
        <ACIcon />
        <span dir="ltr">زبان خارجی(شناسه12817) - Adobe Connect</span>
        <WinCtl>
          <WinCtlBtn><svg width="12" height="2"><path d="M0 1h12" stroke="#222" /></svg></WinCtlBtn>
          <WinCtlBtn><svg width="12" height="12" fill="none" stroke="#222"><rect x=".5" y="2.5" width="9" height="9" /><path d="M3 2.5V.5h8.5v9h-2" /></svg></WinCtlBtn>
          <WinCtlBtn><svg width="13" height="13" stroke="#222"><path d="M.5.5l12 12M12.5.5l-12 12" /></svg></WinCtlBtn>
        </WinCtl>
      </TitleBar>
      <TopBar>
        <AdobeLogo />
        <Meeting>Meeting</Meeting>
        <TopSep />
        <SplitBtn><SplitMain $dark><Speaker /></SplitMain><SplitArrow /></SplitBtn>
        <SplitBtn><SplitMain><HandRaise /></SplitMain><SplitArrow /></SplitBtn>
        <RecDot />
        <TopSep $mr={0} $ml={18} />
        <Help>Help</Help>
        <Signal>{[6, 9, 14, 18, 23].map(h => <SignalBar key={h} $h={h} />)}</Signal>
      </TopBar>
      <Main>
        <SharePod>
          <PodHeader $h={39}>
            <ShareTitle>Share</ShareTitle>
            <ShareDash>-</ShareDash>
            <SqueezedName>{PRESENTER}</SqueezedName>
            <ShareTools>
              <LayoutBtn><LayoutIcon dark /></LayoutBtn>
              <LayoutBtn $on><LayoutIcon /></LayoutBtn>
              <QIcon $ml={13}><FullIcon /></QIcon>
              <VLine />
              <MenuIcon />
            </ShareTools>
          </PodHeader>
          <ShareBody>
            <Paint>
              <PTitle>
                <PaletteIcon />
                <QSep $ml={4} />
                <QIcon $ml={9}><Floppy /></QIcon>
                <QIcon $ml={7}><Undo /></QIcon>
                <QIcon $ml={9}><Undo off /></QIcon>
                <QIcon $ml={10}><Caret /></QIcon>
                <QSep $ml={8} />
                <PTitleText>Untitled - Paint</PTitleText>
                <CaptionBtns>
                  <Caption><svg width="12" height="6"><rect y="2" width="11" height="3" fill="#fff" stroke="#456" /></svg></Caption>
                  <Caption><svg width="12" height="12" fill="#dfe9f5" stroke="#345"><rect x="4" y="1" width="7" height="7" /><rect x="1" y="4" width="7" height="7" /></svg></Caption>
                  <Caption $close><svg width="12" height="11" stroke="#fff" strokeWidth="2.4"><path d="M2 1l8 9M10 1l-8 9" /></svg></Caption>
                </CaptionBtns>
              </PTitle>
              <PTabs>
                <FileBtn><svg width="14" height="11" fill="#eaf0f8"><rect width="14" height="11" /><path d="M4 2h8M4 5h8M4 8h8" stroke="#678" /></svg><FileCaret /></FileBtn>
                <Tab $on>Home</Tab>
                <Tab>View</Tab>
                <HelpBall>?</HelpBall>
              </PTabs>
              <Ribbon>
                <RGroup $w={107}>
                  <RBody>
                    <BigBtn $w={36} $ml={9}><BigIcon><Clipboard /></BigIcon>Paste<Caret /></BigBtn>
                    <SmallCol $ml={8}>
                      <SmallBtn $off><Scissors />Cut</SmallBtn>
                      <SmallBtn $off><CopyIcon />Copy</SmallBtn>
                    </SmallCol>
                  </RBody>
                  <RLabel>Clipboard</RLabel>
                </RGroup>
                <RGroup $w={124}>
                  <RBody>
                    <BigBtn $w={38} $ml={7}><BigIcon><SelectIcon /></BigIcon>Select<Caret /></BigBtn>
                    <SmallCol $ml={7}>
                      <SmallBtn $off><CropIcon />Crop</SmallBtn>
                      <SmallBtn $off><ResizeIcon />Resize</SmallBtn>
                      <SmallBtn><RotateIcon />Rotate <Caret /></SmallBtn>
                    </SmallCol>
                  </RBody>
                  <RLabel>Image</RLabel>
                </RGroup>
                <RGroup $w={81}>
                  <RBody>
                    <ToolCol>
                      <ToolPanel><Pencil /><Bucket /><BigA>A</BigA></ToolPanel>
                      <ToolPanel><Eraser /><Dropper /><Magnifier /></ToolPanel>
                    </ToolCol>
                  </RBody>
                  <RLabel>Tools</RLabel>
                </RGroup>
                <RGroup $w={54}>
                  <RBody><BigBtn $w={54}><BigIcon><BrushIcon /></BigIcon>Brushes<Caret /></BigBtn></RBody>
                  <RLabel>&nbsp;</RLabel>
                </RGroup>
                <RGroup $w={249}>
                  <RBody>
                    <ShapesPanel><Shapes /></ShapesPanel>
                    <ShapeScroll><span>▲</span><span>▾</span><span>▼</span></ShapeScroll>
                    <OutlineCol>
                      <SmallBtn><OutlineIcon />Outline <Caret /></SmallBtn>
                      <SmallBtn><FillIcon />Fill <Caret /></SmallBtn>
                    </OutlineCol>
                  </RBody>
                  <RLabel>Shapes</RLabel>
                </RGroup>
                <RGroup $w={53}>
                  <RBody><BigBtn $w={46} $ml={7}><BigIcon><SizeLines /></BigIcon>Size<Caret /></BigBtn></RBody>
                  <RLabel>&nbsp;</RLabel>
                </RGroup>
                <RGroup $w={400}>
                  <RBody>
                    <ColorOne><ColorChip $c="#00a2e8" />Color<br />1</ColorOne>
                    <ColorTwo><ColorTwoChip />Color</ColorTwo>
                    <Palette>{COLORS.map((c, i) => <Swatch key={i} $c={c} />)}</Palette>
                    <EditColors><Spectrum />Edit</EditColors>
                  </RBody>
                  <RLabel>&nbsp;</RLabel>
                </RGroup>
              </Ribbon>
              <CanvasRow>
                <CanvasPane>
                  <WordGrid>
                    {ROWS.join("").split("").map((l, i) => <Letter key={i}>{l}</Letter>)}
                  </WordGrid>
                  {BOXES.map((b, i) => (
                    <WordBox key={i} style={{ left: b[0] - PANE_X, top: b[1] - PANE_Y, width: b[2] - b[0], height: b[3] - b[1] }} />
                  ))}
                  <Selection style={{ left: SEL[0] - PANE_X, top: SEL[1] - PANE_Y, width: sw, height: sh }}>
                    {handles.map(([a, b], i) => <Handle key={i} style={{ left: a * sw - 3, top: b * sh - 3 }} />)}
                  </Selection>
                  <CursorWrap><CursorArt /></CursorWrap>
                </CanvasPane>
                <VScroll>
                  <ScrollCap>▲</ScrollCap>
                  <VThumb>≡</VThumb>
                  <ScrollFill />
                  <ScrollCap>▼</ScrollCap>
                </VScroll>
              </CanvasRow>
              <HScroll>◂<HThumb>III</HThumb><HEnd>▸</HEnd></HScroll>
              <Status>
                <StatusCell $w={175}><MoveIcon />964, 628px</StatusCell>
                <StatusCell $w={178}><DimIcon />58 × 236px</StatusCell>
                <StatusCell $w={177}><DimIcon w={17} />2294 × 1560px</StatusCell>
                <StatusCell $w={178}><SaveSmall /></StatusCell>
                <StatusCell $w={209} />
                <ZoomPct>100%</ZoomPct>
                <RoundBtn>−</RoundBtn>
                <ZoomSlider><ZoomThumb /></ZoomSlider>
                <RoundBtn>+</RoundBtn>
              </Status>
              <Win7Bar>
                <WinOrb />
                <Grip $ml={14} />
                <Tile $bare $w={26} $ml={16}><PlayerIcon /></Tile>
                <Tile $w={42} $ml={20}><ExplorerTile /></Tile>
                <Tile $on $w={45} $ml={10}><PaletteIcon s={32} /></Tile>
                <Tile $bare $w={35} $ml={14}><GomIcon /></Tile>
                <Tile $red $w={46} $ml={11}><OperaIcon /></Tile>
                <Tile $bare $w={34} $ml={13}><CaldIcon /></Tile>
                <Tile $w={49} $ml={12}><NitroIcon /></Tile>
                <Tile $w={43} $ml={3}><ChromeIcon s={32} /></Tile>
                <Tile $w={50} $ml={9}><WhatsApp /><Badge>26</Badge></Tile>
                <Tile $w={43} $ml={2}><WordIcon /></Tile>
                <Tile $w={46} $ml={9}><Acrobat /></Tile>
                <Spinner><span>▲</span><span>▼</span></Spinner>
                <Grip $ml={9} />
                <DeskText $ml={5} $mt={5}>Desktop</DeskText>
                <QIcon $ml={6} $mt={-8}><FolderSmall /></QIcon>
                <DeskText $ml={4} $mt={-8}>Libraries</DeskText>
                <DeskText $ml={83} $mt={-14}>»</DeskText>
                <Grip $ml={12} />
                <DeskText $ml={8}>EN</DeskText>
                <QIcon $ml={19}><svg width="10" height="6" fill="#e4ecf4"><path d="M5 0l5 6H0z" /></svg></QIcon>
                <QIcon $ml={16}><SpeakerLine s="#eef2f7" /></QIcon>
                <Win7Clock>02:22 PM<br />12/23/2020</Win7Clock>
                <ShowDesk />
              </Win7Bar>
              <Lattice><LatticeArt /></Lattice>
            </Paint>
          </ShareBody>
        </SharePod>
        <RightCol>
          <AttPod>
            <PodHeader $h={37} $pb={2}>
              <PodTitle>Attendees</PodTitle>
              <PodSub>(40)</PodSub>
              <MenuGlyph><MenuIcon c="#aaa" /></MenuGlyph>
            </PodHeader>
            <ViewBar>
              <ViewBtn $on><ViewListIcon /></ViewBtn>
              <ViewBtn><ViewCardIcon /></ViewBtn>
            </ViewBar>
            <PresenterRow><PhoneIcon /><SqueezedName>{PRESENTER}</SqueezedName></PresenterRow>
            <ListWrap>
              <AttList>
                {ATT.map((a, i) => (a.m
                  ? <AttRowMobile key={i} $alt={i % 2 === 1}><UserMobile /><SqueezedName>{a.n}</SqueezedName></AttRowMobile>
                  : <AttRow key={i} $alt={i % 2 === 1}><UserIcon /><SqueezedName>{a.n}</SqueezedName></AttRow>
                ))}
              </AttList>
              <SideScroll><SideThumb $h={63} $mt={180}>≡</SideThumb></SideScroll>
            </ListWrap>
          </AttPod>
          <ChatPod>
            <PodHeader $h={37}>
              <PodTitle>Chat</PodTitle>
              <PodSub>(Everyone)</PodSub>
              <MenuGlyph><MenuIcon c="#aaa" /></MenuGlyph>
            </PodHeader>
            <ChatBody>
              <Msgs>
                {MSGS.map(([n, t], i) => <Msg key={i}><ArabicName $s={9}>{n}</ArabicName>: {t}</Msg>)}
                <Typing>Multiple Attendees are typing...</Typing>
              </Msgs>
              <SideScroll><SideThumb $h={11} $mt={133}>≡</SideThumb></SideScroll>
            </ChatBody>
            <InputRow><ChatInput /><SendBtn><ChatBubble /></SendBtn></InputRow>
            <ChatFoot><ChatTab>Everyone</ChatTab></ChatFoot>
          </ChatPod>
        </RightCol>
      </Main>
      <Taskbar>
        <StartBtn><WinLogo /></StartBtn>
        <SearchBox><SearchGlass />Type here to search</SearchBox>
        <TaskItem><Cortana /></TaskItem>
        <TaskItem><TaskView /></TaskItem>
        <TaskItem><Folder10 /></TaskItem>
        <TaskItem><StoreIcon /></TaskItem>
        <TaskItem><MailIcon /></TaskItem>
        <TaskItem><EdgeIcon /></TaskItem>
        <TaskItem $open><ChromeIcon s={28} /></TaskItem>
        <TaskItem $on $open><ACIcon s={24} /></TaskItem>
        <Tray>
          <TrayItem $w={30}><svg width="16" height="9" fill="none" stroke="#eee" strokeWidth="1.2"><path d="M1 8l7-7 7 7" /></svg></TrayItem>
          <TrayItem $w={29}><Mic /></TrayItem>
          <TrayItem $w={31}><Battery /></TrayItem>
          <TrayItem $w={31}><Wifi /></TrayItem>
          <TrayItem $w={30}><SpeakerLine big /></TrayItem>
          <TrayItem $w={44}>ENG</TrayItem>
          <TrayItem $w={84}><Clock>2:20 PM<br />12/23/2020</Clock></TrayItem>
          <TrayItem $w={54}><NotifIcon /><NotifBadge>1</NotifBadge></TrayItem>
          <DeskStrip />
        </Tray>
      </Taskbar>
    </Page>
  );
}
